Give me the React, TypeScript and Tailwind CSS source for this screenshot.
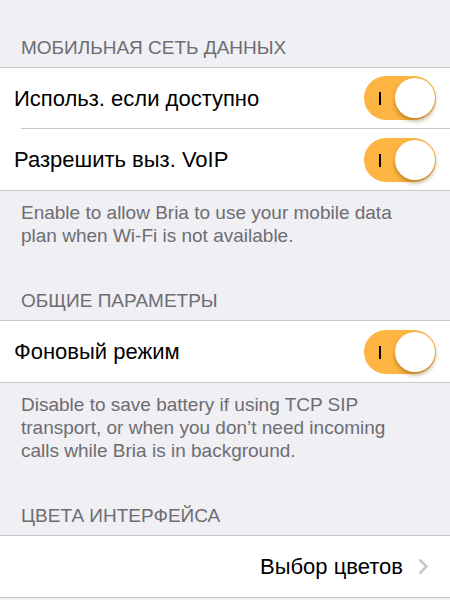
const font = { fontFamily: '"Liberation Sans", Arial, sans-serif' }

function Toggle() {
  return (
    <div className="relative h-[44px] w-[72px] shrink-0 rounded-full bg-[#fdb441]">
      <span className="absolute top-[16px] left-[15px] h-[13px] w-[2px] bg-black" />
      <span className="absolute top-[2px] right-[1px] h-[40px] w-[40px] rounded-full bg-white shadow-[0_3px_4px_rgba(120,70,0,0.45)]" />
    </div>
  )
}

function SectionHeader({ children, first }: { children: string; first?: boolean }) {
  return (
    <div
      className={`${first ? 'pt-[36px]' : 'pt-[42px]'} pb-[8px] pl-[21px] text-[19px] leading-[23px] text-[#6d6d72] uppercase`}
    >
      {children}
    </div>
  )
}

function SwitchRow({ label, last }: { label: string; last?: boolean }) {
  return (
    <div className="pl-[21px]">
      <div
        className={`flex h-[61px] items-center justify-between pr-[14px] ${last ? '' : 'border-b border-[#c8c7cc]'}`}
      >
        <span className="-ml-[7px] text-[22px] text-black">{label}</span>
        <Toggle />
      </div>
    </div>
  )
}

function Footer({ children }: { children: string }) {
  return (
    <p className="pt-[10px] pr-[30px] pl-[21px] text-[19px] leading-[23px] text-[#6d6d72]">
      {children}
    </p>
  )
}

export default function App() {
  return (
    <div className="h-[600px] w-[450px] overflow-hidden bg-[#efeff4]" style={font}>
      <SectionHeader first>Мобильная сеть данных</SectionHeader>
      <div className="border-y border-[#c8c7cc] bg-white">
        <SwitchRow label="Использ. если доступно" />
        <SwitchRow label="Разрешить выз. VoIP" last />
      </div>
      <Footer>Enable to allow Bria to use your mobile data plan when Wi-Fi is not available.</Footer>

      <SectionHeader>Общие параметры</SectionHeader>
      <div className="border-y border-[#c8c7cc] bg-white">
        <SwitchRow label="Фоновый режим" last />
      </div>
      <Footer>
        Disable to save battery if using TCP SIP transport, or when you don’t need incoming calls while Bria is in background.
      </Footer>

      <SectionHeader>Цвета интерфейса</SectionHeader>
      <div className="border-y border-[#c8c7cc] bg-white">
        <div className="flex h-[61px] items-center justify-end gap-[15px] pr-[21px]">
          <span className="text-[22px] text-black">Выбор цветов</span>
          {/* chevron */}
          <svg width="11" height="17" viewBox="0 0 11 17" fill="none">
            <path d="M1.5 1.5 L8.5 8.5 L1.5 15.5" stroke="#c7c7cc" strokeWidth="2.5" />
          </svg>
        </div>
      </div>
    </div>
  )
}
